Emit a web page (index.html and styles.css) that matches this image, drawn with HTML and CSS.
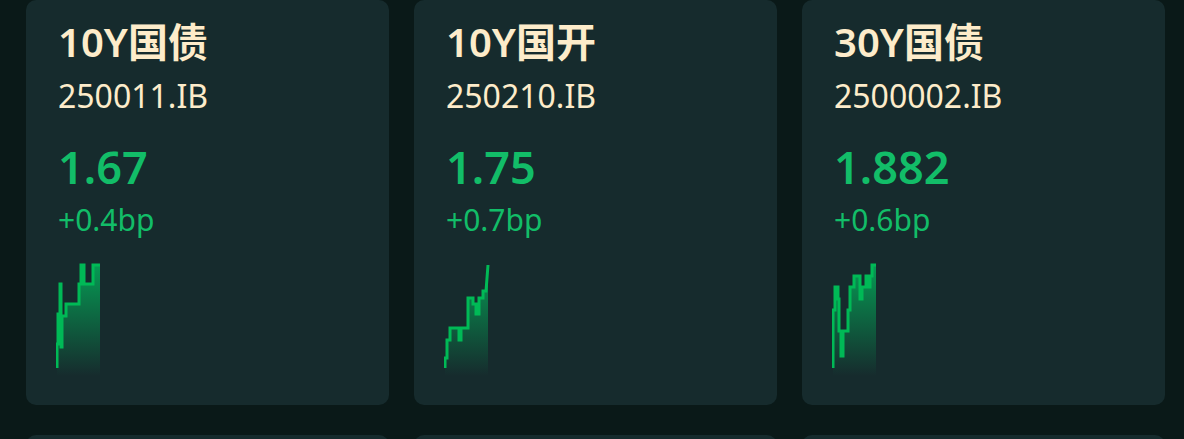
FILE: index.html
```html
<!DOCTYPE html>
<html lang="zh-CN">

<head>
    <meta charset="UTF-8">
    <meta name="viewport" content="width=device-width, initial-scale=1.0">
    <title>债券行情</title>
    <link rel="stylesheet" href="styles.css">
</head>

<body>
    <div class="grid">
        <div class="card">
            <div class="name">10Y国债</div>
            <div class="code">250011.IB</div>
            <div class="price">1.67</div>
            <div class="change">+0.4bp</div>
            <svg class="spark" width="46" height="115" viewBox="0 0 46 115">
                <defs>
                    <linearGradient id="fill1" x1="0" y1="0" x2="0" y2="1">
                        <stop offset="0" stop-color="#00c060" stop-opacity="0.75"/>
                        <stop offset="1" stop-color="#00c060" stop-opacity="0"/>
                    </linearGradient>
                </defs>
                <path class="area" fill="url(#fill1)" d="M1,107 L1,83 L2,83 L2,53 L4,53 L4,23 L5,23 L5,86 L6,86 L6,55 L10,55 L10,43 L23,43 L23,23 L25,23 L25,4 L28,4 L28,23 L37,23 L37,4 L44,4 L44,115 L1,115 Z"/>
                <path class="line" d="M1,107 L1,83 L2,83 L2,53 L4,53 L4,23 L5,23 L5,86 L6,86 L6,55 L10,55 L10,43 L23,43 L23,23 L25,23 L25,4 L28,4 L28,23 L37,23 L37,4 L44,4"/>
            </svg>
        </div>
        <div class="card">
            <div class="name">10Y国开</div>
            <div class="code">250210.IB</div>
            <div class="price">1.75</div>
            <div class="change">+0.7bp</div>
            <svg class="spark" width="46" height="115" viewBox="0 0 46 115">
                <defs>
                    <linearGradient id="fill2" x1="0" y1="0" x2="0" y2="1">
                        <stop offset="0" stop-color="#00c060" stop-opacity="0.75"/>
                        <stop offset="1" stop-color="#00c060" stop-opacity="0"/>
                    </linearGradient>
                </defs>
                <path class="area" fill="url(#fill2)" d="M1,107 L1,97 L3,97 L3,79 L6,79 L6,67 L15,67 L15,79 L17,79 L17,67 L24,67 L24,37 L29,37 L29,43 L32,43 L32,53 L35,53 L35,37 L39,37 L39,30 L42,30 L44,4 L44,115 L1,115 Z"/>
                <path class="line" d="M1,107 L1,97 L3,97 L3,79 L6,79 L6,67 L15,67 L15,79 L17,79 L17,67 L24,67 L24,37 L29,37 L29,43 L32,43 L32,53 L35,53 L35,37 L39,37 L39,30 L42,30 L44,4"/>
            </svg>
        </div>
        <div class="card">
            <div class="name">30Y国债</div>
            <div class="code">2500002.IB</div>
            <div class="price">1.882</div>
            <div class="change">+0.6bp</div>
            <svg class="spark" width="46" height="115" viewBox="0 0 46 115">
                <defs>
                    <linearGradient id="fill3" x1="0" y1="0" x2="0" y2="1">
                        <stop offset="0" stop-color="#00c060" stop-opacity="0.75"/>
                        <stop offset="1" stop-color="#00c060" stop-opacity="0"/>
                    </linearGradient>
                </defs>
                <path class="area" fill="url(#fill3)" d="M1,107 L1,49 L3,49 L3,26 L6,26 L6,38 L7,38 L7,70 L9,70 L9,95 L11,95 L11,70 L16,70 L16,49 L18,49 L18,26 L22,26 L22,15 L28,15 L28,38 L30,38 L30,26 L34,26 L34,15 L36,15 L36,26 L38,26 L38,15 L40,15 L40,4 L44,4 L44,115 L1,115 Z"/>
                <path class="line" d="M1,107 L1,49 L3,49 L3,26 L6,26 L6,38 L7,38 L7,70 L9,70 L9,95 L11,95 L11,70 L16,70 L16,49 L18,49 L18,26 L22,26 L22,15 L28,15 L28,38 L30,38 L30,26 L34,26 L34,15 L36,15 L36,26 L38,26 L38,15 L40,15 L40,4 L44,4"/>
            </svg>
        </div>
        <div class="card peek"></div>
        <div class="card peek"></div>
        <div class="card peek"></div>
    </div>
</body>

</html>
```

FILE: styles.css
```css
html {
    overflow: hidden;
}
body {
    font-family: 'Noto Sans', 'Noto Sans CJK SC', sans-serif;
    margin: 0;
    padding: 0;
    background-color: #0a1918;
    height: 439px;
    overflow: hidden;
}
.grid {
    display: grid;
    grid-template-columns: repeat(3, 363px);
    column-gap: 25px;
    row-gap: 30px;
    padding-left: 26px;
}
.card {
    background-color: #162b2d;
    border-radius: 10px;
    height: 405px;
    box-sizing: border-box;
    padding: 18px 32px 0;
}
.card.peek {
    height: 4px;
    border-radius: 10px 10px 0 0;
}
.name {
    font-size: 40px;
    font-weight: 600;
    line-height: 48px;
    color: #fdecca;
}
.code {
    margin-top: 10px;
    font-size: 32px;
    line-height: 40px;
    color: #fdecca;
}
.price {
    margin-top: 25px;
    font-size: 45px;
    font-weight: 600;
    line-height: 52px;
    color: #12bd68;
}
.change {
    margin-top: 9px;
    font-size: 30px;
    line-height: 36px;
    color: #12bd68;
}
.spark {
    display: block;
    margin-top: 23px;
    margin-left: -2px;
}
.spark .line {
    fill: none;
    stroke: #00b956;
    stroke-width: 3;
}
.spark .area {
    stroke: none;
}
```
